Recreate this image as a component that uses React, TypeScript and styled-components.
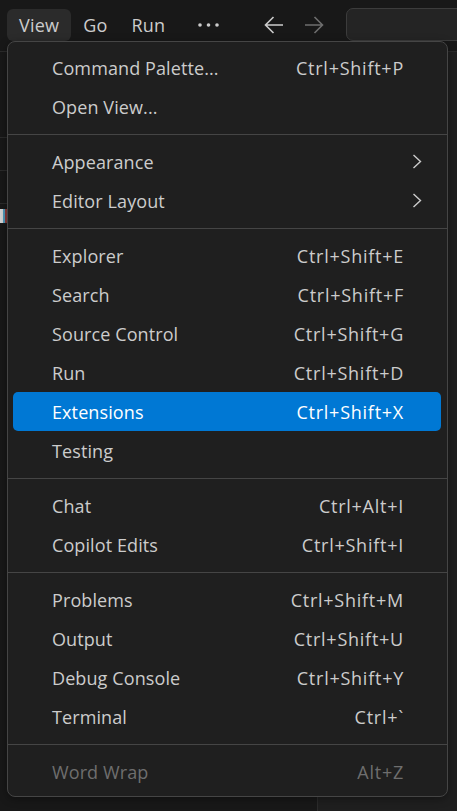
import React from 'react';
import styled, { createGlobalStyle } from 'styled-components';

const GlobalStyle = createGlobalStyle`
  html, body {
    margin: 0;
    padding: 0;
    background: #181818;
  }
  * {
    box-sizing: border-box;
  }
`;

const Window = styled.div`
  position: relative;
  width: 457px;
  height: 811px;
  overflow: hidden;
  background: #181818;
  font-family: 'Open Sans', 'Noto Sans', sans-serif;
  color: #cccccc;
  display: flex;
  flex-direction: column;
`;

const TitleBar = styled.div`
  height: 52px;
  flex-shrink: 0;
  display: flex;
  align-items: flex-start;
  padding: 9px 0 0 7px;
  border-bottom: 1px solid #2b2b2b;
  background: #181818;
`;

const MenuButton = styled.div<{ $active?: boolean }>`
  height: 32px;
  padding: 0 12px;
  display: flex;
  align-items: center;
  font-size: 18px;
  letter-spacing: 0.2px;
  border-radius: 6px;
  background: ${(p) => (p.$active ? '#2b2b2b' : 'transparent')};
  color: #cccccc;
`;

const MoreButton = styled.div`
  height: 32px;
  width: 36px;
  margin-left: 14px;
  display: flex;
  align-items: center;
  justify-content: center;
`;

const NavGroup = styled.div`
  height: 32px;
  margin-left: 37px;
  display: flex;
  align-items: center;
  gap: 20px;
`;

const SearchBox = styled.div`
  height: 33px;
  flex: 1;
  margin-left: 22px;
  margin-top: -1px;
  margin-right: -12px;
  border: 1px solid #3c3c3c;
  border-radius: 7px;
  background: #242424;
`;

const Body = styled.div`
  flex: 1;
  display: flex;
`;

const Sidebar = styled.div`
  width: 318px;
  border-right: 1px solid #2b2b2b;
  background: #181818;
  display: flex;
  flex-direction: column;
`;

const SidebarTop = styled.div`
  height: 85px;
`;

const SidebarHeader = styled.div`
  height: 33px;
  border-top: 1px solid #2b2b2b;
`;

const FileIcon = styled.div`
  margin-top: 4px;
  display: flex;
`;

const Editor = styled.div`
  flex: 1;
  background: #1f1f1f;
`;

const Menu = styled.div`
  position: absolute;
  left: 7px;
  top: 41px;
  width: 441px;
  padding: 6px 0 5px;
  background: #1f1f1f;
  border: 1px solid #454545;
  border-radius: 8px;
  box-shadow: 0 2px 8px rgba(0, 0, 0, 0.36);
  display: flex;
  flex-direction: column;
`;

const Item = styled.div<{ $selected?: boolean; $disabled?: boolean }>`
  height: 39px;
  margin: 0 6px 0 5px;
  padding: 0 38px 0 39px;
  border-radius: 5px;
  display: flex;
  align-items: center;
  justify-content: space-between;
  font-size: 18px;
  letter-spacing: 0.1px;
  background: ${(p) => (p.$selected ? '#0078d4' : 'transparent')};
  color: ${(p) => (p.$selected ? '#ffffff' : p.$disabled ? '#6e6e6e' : '#cccccc')};
`;

const Label = styled.span`
  white-space: nowrap;
`;

const Shortcut = styled.span`
  white-space: nowrap;
  letter-spacing: 0.75px;
  margin-right: -1px;
`;

const SubmenuArrow = styled.span`
  display: flex;
  margin-right: -19px;
`;

const Separator = styled.div`
  height: 1px;
  margin: 8px 0 7px;
  background: #454545;
`;

type Entry =
  | { kind: 'item'; label: string; shortcut?: string; submenu?: boolean; selected?: boolean; disabled?: boolean }
  | { kind: 'sep' };

const entries: Entry[] = [
  { kind: 'item', label: 'Command Palette...', shortcut: 'Ctrl+Shift+P' },
  { kind: 'item', label: 'Open View...' },
  { kind: 'sep' },
  { kind: 'item', label: 'Appearance', submenu: true },
  { kind: 'item', label: 'Editor Layout', submenu: true },
  { kind: 'sep' },
  { kind: 'item', label: 'Explorer', shortcut: 'Ctrl+Shift+E' },
  { kind: 'item', label: 'Search', shortcut: 'Ctrl+Shift+F' },
  { kind: 'item', label: 'Source Control', shortcut: 'Ctrl+Shift+G' },
  { kind: 'item', label: 'Run', shortcut: 'Ctrl+Shift+D' },
  { kind: 'item', label: 'Extensions', shortcut: 'Ctrl+Shift+X', selected: true },
  { kind: 'item', label: 'Testing' },
  { kind: 'sep' },
  { kind: 'item', label: 'Chat', shortcut: 'Ctrl+Alt+I' },
  { kind: 'item', label: 'Copilot Edits', shortcut: 'Ctrl+Shift+I' },
  { kind: 'sep' },
  { kind: 'item', label: 'Problems', shortcut: 'Ctrl+Shift+M' },
  { kind: 'item', label: 'Output', shortcut: 'Ctrl+Shift+U' },
  { kind: 'item', label: 'Debug Console', shortcut: 'Ctrl+Shift+Y' },
  { kind: 'item', label: 'Terminal', shortcut: 'Ctrl+`' },
  { kind: 'sep' },
  { kind: 'item', label: 'Word Wrap', shortcut: 'Alt+Z', disabled: true },
];

const Chevron = () => (
  <svg width="10" height="15" viewBox="0 0 10 15" fill="none">
    <path d="M1.5 1 L8.5 7.5 L1.5 14" stroke="#cccccc" strokeWidth="1.4" />
  </svg>
);

const Dots = () => (
  <svg width="24" height="6" viewBox="0 0 24 6">
    <circle cx="3" cy="3" r="1.8" fill="#cccccc" />
    <circle cx="11.5" cy="3" r="1.8" fill="#cccccc" />
    <circle cx="20" cy="3" r="1.8" fill="#cccccc" />
  </svg>
);

const NavArrow = ({ dir, color }: { dir: 'left' | 'right'; color: string }) => (
  <svg width="20" height="18" viewBox="0 0 20 18" fill="none">
    {dir === 'left' ? (
      <path d="M19 9 H1.5 M9.5 1 L1.5 9 L9.5 17" stroke={color} strokeWidth="1.6" />
    ) : (
      <path d="M1 9 H18.5 M10.5 1 L18.5 9 L10.5 17" stroke={color} strokeWidth="1.6" />
    )}
  </svg>
);

const EfIcon = () => (
  <svg width="7" height="16" viewBox="0 0 7 16">
    <rect x="0" y="1" width="3" height="14" fill="#d4d4d4" />
    <rect x="3" y="1" width="2" height="14" fill="#519aba" />
    <rect x="5" y="1" width="2" height="14" fill="#8b3a3a" />
  </svg>
);

const App: React.FC = () => {
  return (
    <Window>
      <GlobalStyle />
      <TitleBar>
        <MenuButton $active>View</MenuButton>
        <MenuButton>Go</MenuButton>
        <MenuButton>Run</MenuButton>
        <MoreButton>
          <Dots />
        </MoreButton>
        <NavGroup>
          <NavArrow dir="left" color="#cccccc" />
          <NavArrow dir="right" color="#6e6e6e" />
        </NavGroup>
        <SearchBox />
      </TitleBar>
      <Body>
        <Sidebar>
          <SidebarTop />
          <SidebarHeader />
          <SidebarHeader />
          <SidebarHeader>
            <FileIcon>
              <EfIcon />
            </FileIcon>
          </SidebarHeader>
        </Sidebar>
        <Editor />
      </Body>
      <Menu>
        {entries.map((e, i) =>
          e.kind === 'sep' ? (
            <Separator key={i} />
          ) : (
            <Item key={i} $selected={e.selected} $disabled={e.disabled}>
              <Label>{e.label}</Label>
              {e.shortcut && <Shortcut>{e.shortcut}</Shortcut>}
              {e.submenu && (
                <SubmenuArrow>
                  <Chevron />
                </SubmenuArrow>
              )}
            </Item>
          )
        )}
      </Menu>
    </Window>
  );
};

export default App;
